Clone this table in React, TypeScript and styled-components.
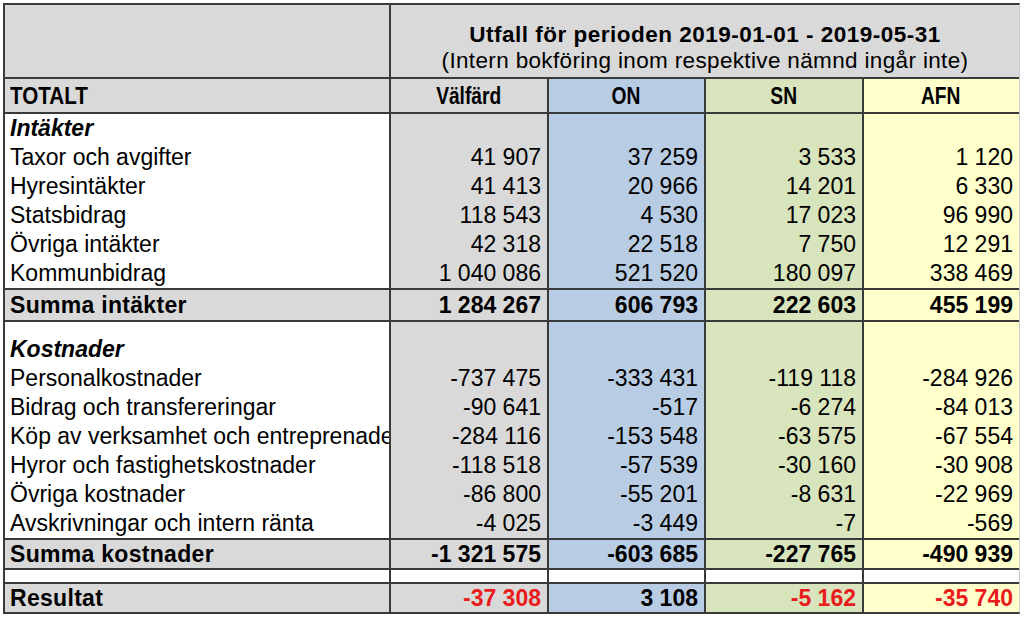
import React from 'react';
import styled, { createGlobalStyle } from 'styled-components';

const GlobalStyle = createGlobalStyle`
  html, body { margin: 0; padding: 0; background: #ffffff; }
  body { font-family: "Liberation Sans", Arial, sans-serif; color: #000; }
`;

const LINE = '#3a3a3a';
const FILL = {
  white: '#ffffff',
  gray: '#d9d9d9',
  on: '#b8cce4',
  sn: '#d8e4bc',
  afn: '#ffffcc',
};
type Tone = keyof typeof FILL;
type Align = 'left' | 'right' | 'center';

const Page = styled.div`
  padding: 3px 0 0 3px;
`;

const Table = styled.div`
  width: 1017px;
  box-sizing: border-box;
  border-top: 2px solid ${LINE};
  border-left: 2px solid ${LINE};
  border-bottom: 2px solid ${LINE};
  border-right: 1px solid #c8c8c8;
  font-size: 23px;
`;

const Row = styled.div<{ $h: number; $rule?: boolean }>`
  display: grid;
  grid-template-columns: 384px 158px 157px 158px 157px;
  box-sizing: border-box;
  height: ${(p) => p.$h + (p.$rule ? 2 : 0)}px;
  border-bottom: ${(p) => (p.$rule ? `2px solid ${LINE}` : 'none')};
`;

const Cell = styled.div<{
  $tone: Tone;
  $divider?: boolean;
  $align: Align;
  $bold?: boolean;
  $italic?: boolean;
  $red?: boolean;
}>`
  box-sizing: border-box;
  min-width: 0;
  background: ${(p) => FILL[p.$tone]};
  border-left: ${(p) => (p.$divider ? `2px solid ${LINE}` : 'none')};
  display: flex;
  align-items: center;
  justify-content: ${(p) =>
    p.$align === 'left' ? 'flex-start' : p.$align === 'right' ? 'flex-end' : 'center'};
  padding: 0 6px 0 5px;
  white-space: nowrap;
  overflow: hidden;
  font-weight: ${(p) => (p.$bold ? 700 : 400)};
  font-style: ${(p) => (p.$italic ? 'italic' : 'normal')};
  letter-spacing: ${(p) => (p.$bold && !p.$italic && p.$align === 'left' ? '0.3px' : '0')};
  color: ${(p) => (p.$red ? '#ea1b1b' : '#000')};
`;

const TitleCell = styled.div`
  grid-column: 2 / span 4;
  box-sizing: border-box;
  background: ${FILL.gray};
  border-left: 2px solid ${LINE};
  display: flex;
  flex-direction: column;
  align-items: center;
  justify-content: flex-end;
  padding-bottom: 3px;
`;

const Title = styled.div`
  font-weight: 700;
  font-size: 22.5px;
  letter-spacing: 0.5px;
  line-height: 26px;
`;

const Subtitle = styled.div`
  font-size: 22.5px;
  letter-spacing: 0.35px;
  line-height: 26px;
`;

const Condensed = styled.span<{ $scale: number; $origin: 'left' | 'center' }>`
  display: inline-block;
  font-size: 24px;
  font-weight: 700;
  transform: scaleX(${(p) => p.$scale});
  transform-origin: ${(p) => p.$origin} center;
`;

const tones: Tone[] = ['gray', 'on', 'sn', 'afn'];

type DataRow = {
  label: string;
  values: string[];
  kind: 'section' | 'item' | 'sum' | 'result';
  rule?: boolean;
  h: number;
};

const income: DataRow[] = [
  { label: 'Intäkter', values: ['', '', '', ''], kind: 'section', h: 29 },
  { label: 'Taxor och avgifter', values: ['41 907', '37 259', '3 533', '1 120'], kind: 'item', h: 29 },
  { label: 'Hyresintäkter', values: ['41 413', '20 966', '14 201', '6 330'], kind: 'item', h: 29 },
  { label: 'Statsbidrag', values: ['118 543', '4 530', '17 023', '96 990'], kind: 'item', h: 29 },
  { label: 'Övriga intäkter', values: ['42 318', '22 518', '7 750', '12 291'], kind: 'item', h: 29 },
  { label: 'Kommunbidrag', values: ['1 040 086', '521 520', '180 097', '338 469'], kind: 'item', h: 29, rule: true },
  { label: 'Summa intäkter', values: ['1 284 267', '606 793', '222 603', '455 199'], kind: 'sum', h: 30, rule: true },
];

const costs: DataRow[] = [
  { label: 'Kostnader', values: ['', '', '', ''], kind: 'section', h: 29 },
  { label: 'Personalkostnader', values: ['-737 475', '-333 431', '-119 118', '-284 926'], kind: 'item', h: 29 },
  { label: 'Bidrag och transfereringar', values: ['-90 641', '-517', '-6 274', '-84 013'], kind: 'item', h: 29 },
  { label: 'Köp av verksamhet och entreprenader', values: ['-284 116', '-153 548', '-63 575', '-67 554'], kind: 'item', h: 29 },
  { label: 'Hyror och fastighetskostnader', values: ['-118 518', '-57 539', '-30 160', '-30 908'], kind: 'item', h: 29 },
  { label: 'Övriga kostnader', values: ['-86 800', '-55 201', '-8 631', '-22 969'], kind: 'item', h: 29 },
  { label: 'Avskrivningar och intern ränta', values: ['-4 025', '-3 449', '-7', '-569'], kind: 'item', h: 29, rule: true },
  { label: 'Summa kostnader', values: ['-1 321 575', '-603 685', '-227 765', '-490 939'], kind: 'sum', h: 28, rule: true },
];

const DataLine: React.FC<{ row: DataRow }> = ({ row }) => {
  const strong = row.kind === 'sum' || row.kind === 'result';
  return (
    <Row $h={row.h} $rule={row.rule}>
      <Cell
        $tone={strong ? 'gray' : 'white'}
        $align="left"
        $bold={strong || row.kind === 'section'}
        $italic={row.kind === 'section'}
      >
        {row.label}
      </Cell>
      {row.values.map((v, i) => (
        <Cell
          key={i}
          $tone={tones[i]}
          $divider
          $align="right"
          $bold={strong}
          $red={row.kind === 'result' && v.startsWith('-')}
        >
          {v}
        </Cell>
      ))}
    </Row>
  );
};

const EmptyLine: React.FC<{ h: number; rule?: boolean; plain?: boolean }> = ({ h, rule, plain }) => (
  <Row $h={h} $rule={rule}>
    <Cell $tone="white" $align="left" />
    {tones.map((t, i) => (
      <Cell key={i} $tone={plain ? 'white' : t} $divider $align="right" />
    ))}
  </Row>
);

const heads = ['Välfärd', 'ON', 'SN', 'AFN'];

export default function App() {
  return (
    <>
      <GlobalStyle />
      <Page>
        <Table>
          <Row $h={72} $rule>
            <Cell $tone="gray" $align="left" />
            <TitleCell>
              <Title>Utfall för perioden 2019-01-01 - 2019-05-31</Title>
              <Subtitle>(Intern bokföring inom respektive nämnd ingår inte)</Subtitle>
            </TitleCell>
          </Row>
          <Row $h={33} $rule>
            <Cell $tone="gray" $align="left">
              <Condensed $scale={0.86} $origin="left">TOTALT</Condensed>
            </Cell>
            {heads.map((h, i) => (
              <Cell key={h} $tone={tones[i]} $divider $align="center">
                <Condensed $scale={0.8} $origin="center">{h}</Condensed>
              </Cell>
            ))}
          </Row>
          {income.map((r) => (
            <DataLine key={r.label} row={r} />
          ))}
          <EmptyLine h={13} />
          {costs.map((r) => (
            <DataLine key={r.label} row={r} />
          ))}
          <EmptyLine h={12} rule plain />
          <DataLine row={{ label: 'Resultat', values: ['-37 308', '3 108', '-5 162', '-35 740'], kind: 'result', h: 28 }} />
        </Table>
      </Page>
    </>
  );
}
